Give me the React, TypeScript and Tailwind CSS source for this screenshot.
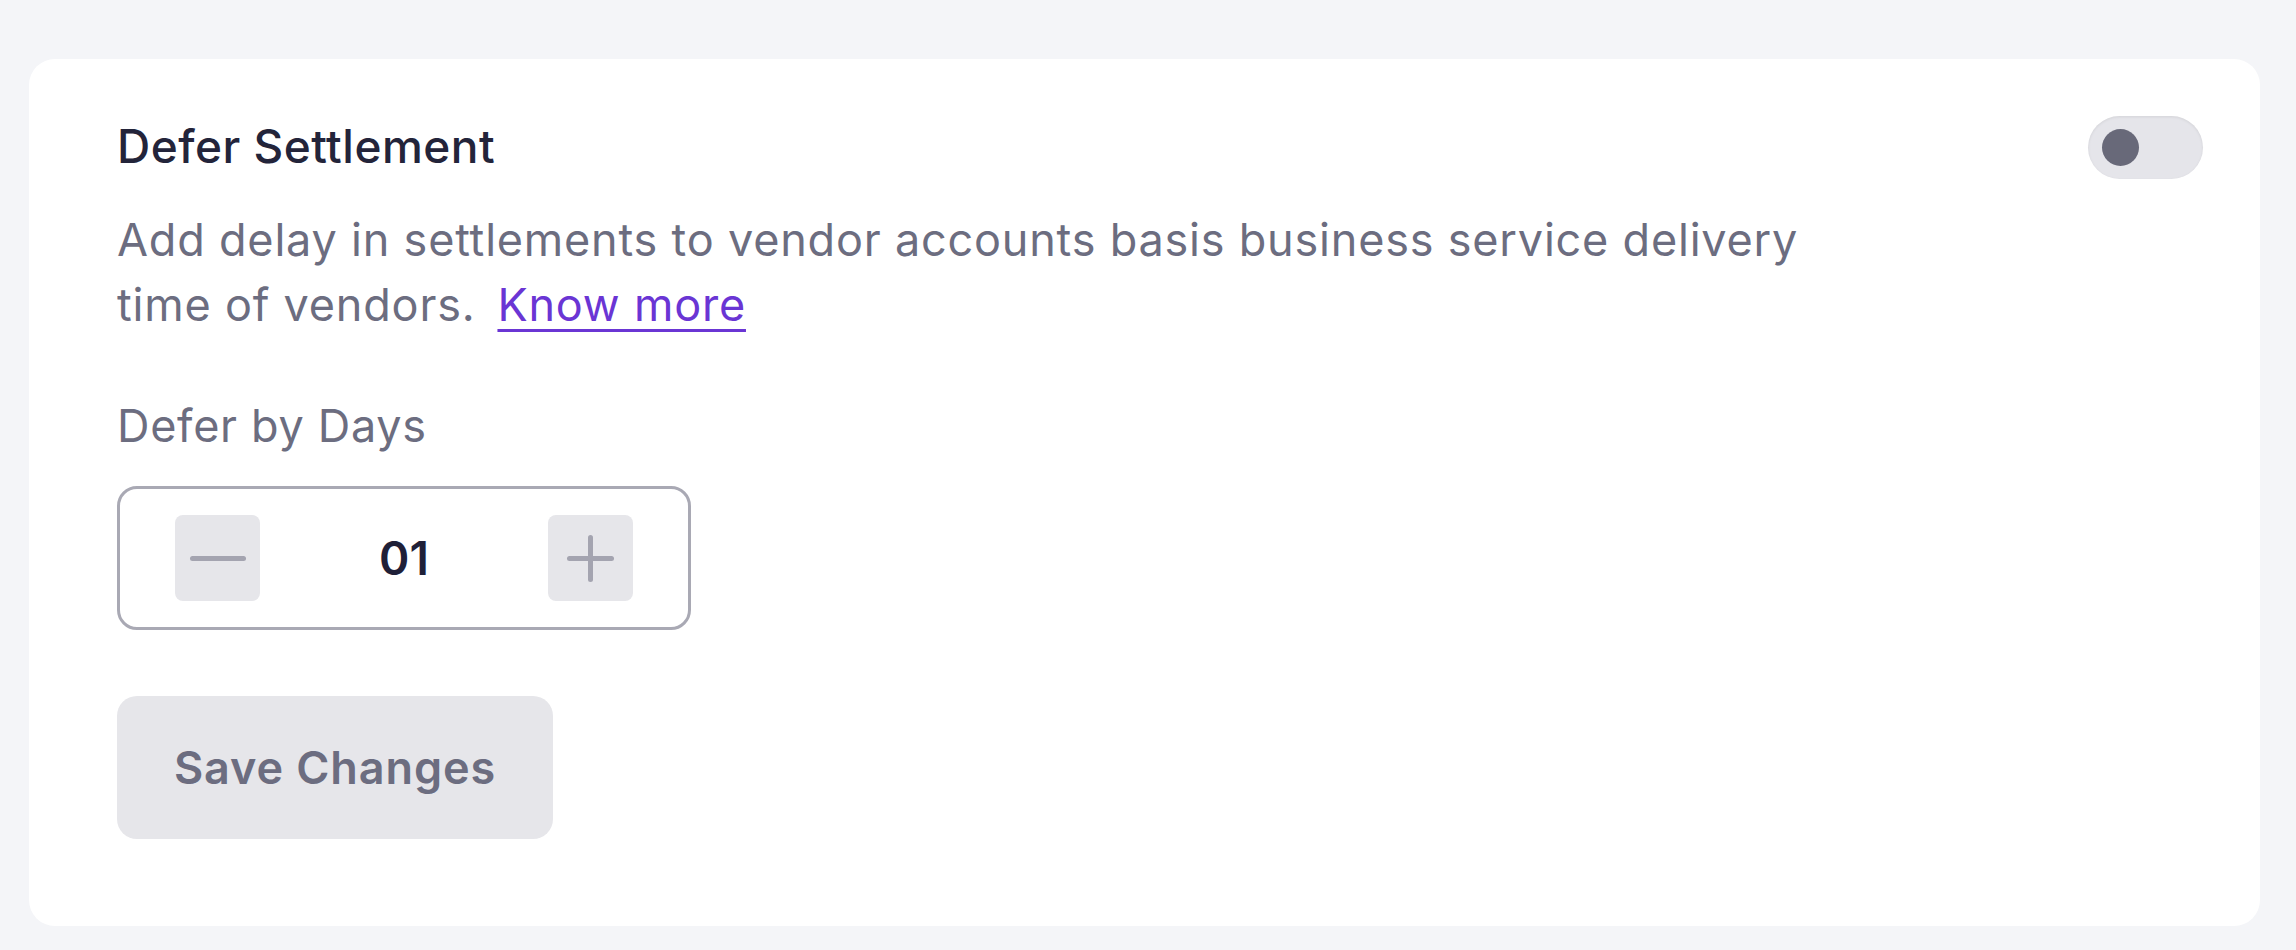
import React, { useState } from "react";

export default function App() {
  const [on, setOn] = useState(false);
  const [days, setDays] = useState(1);
  const font = { fontFamily: "Inter, 'Noto Sans', sans-serif" };
  return (
    <div
      className="w-[2296px] h-[950px] bg-[#f4f5f8] pt-[59px] pl-[29px] pr-[36px]"
      style={font}
    >
      <div className="bg-white rounded-[26px] pl-[88px] pr-[57px] pt-[53px] pb-[87px]">
        <div className="flex items-center justify-between">
          <h2 className="text-[46px] leading-[56px] font-medium text-[#23243a] tracking-[0.5px]">
            Defer Settlement
          </h2>
          <button
            onClick={() => setOn(!on)}
            className="w-[115px] h-[63px] rounded-full bg-[#e5e5ea] shadow-[inset_0_1px_3px_rgba(0,0,0,0.08)] flex items-center px-[14px] mt-[4px]"
          >
            <span className="w-[37px] h-[37px] rounded-full bg-[#686979] block" />
          </button>
        </div>
        <div className="mt-[28px] text-[45px] leading-[65px] text-[#6c6d80] tracking-[0.8px]">
          <p>Add delay in settlements to vendor accounts basis business service delivery</p>
          <div className="flex items-baseline gap-[22px]">
            <span>time of vendors.</span>
            <a href="#" className="text-[#6a35d4] underline decoration-[3px] underline-offset-[8px]">
              Know more
            </a>
          </div>
        </div>
        <div className="mt-[61px] text-[45px] leading-[56px] text-[#6c6d80] tracking-[0.7px]">
          Defer by Days
        </div>
        <div className="mt-[32px] w-[574px] h-[144px] border-[3px] border-[#a9a9b4] rounded-[20px] flex items-center justify-between px-[55px]">
          <button
            onClick={() => setDays(Math.max(0, days - 1))}
            className="w-[85px] h-[86px] rounded-[8px] bg-[#e6e6ea] flex items-center justify-center"
          >
            <span className="block w-[56px] h-[5px] rounded-full bg-[#a4a4b0]" />
          </button>
          <span className="text-[46px] font-semibold text-[#1f2038]">
            {String(days).padStart(2, "0")}
          </span>
          <button
            onClick={() => setDays(days + 1)}
            className="w-[85px] h-[86px] rounded-[8px] bg-[#e6e6ea] flex items-center justify-center relative"
          >
            <span className="block w-[47px] h-[5px] rounded-full bg-[#a4a4b0]" />
            <span className="absolute w-[5px] h-[47px] rounded-full bg-[#a4a4b0]" />
          </button>
        </div>
        <button className="mt-[66px] w-[436px] h-[143px] rounded-[20px] bg-[#e6e6ea] text-[45px] font-semibold text-[#6c6d80] tracking-[0.9px]">
          Save Changes
        </button>
      </div>
    </div>
  );
}
